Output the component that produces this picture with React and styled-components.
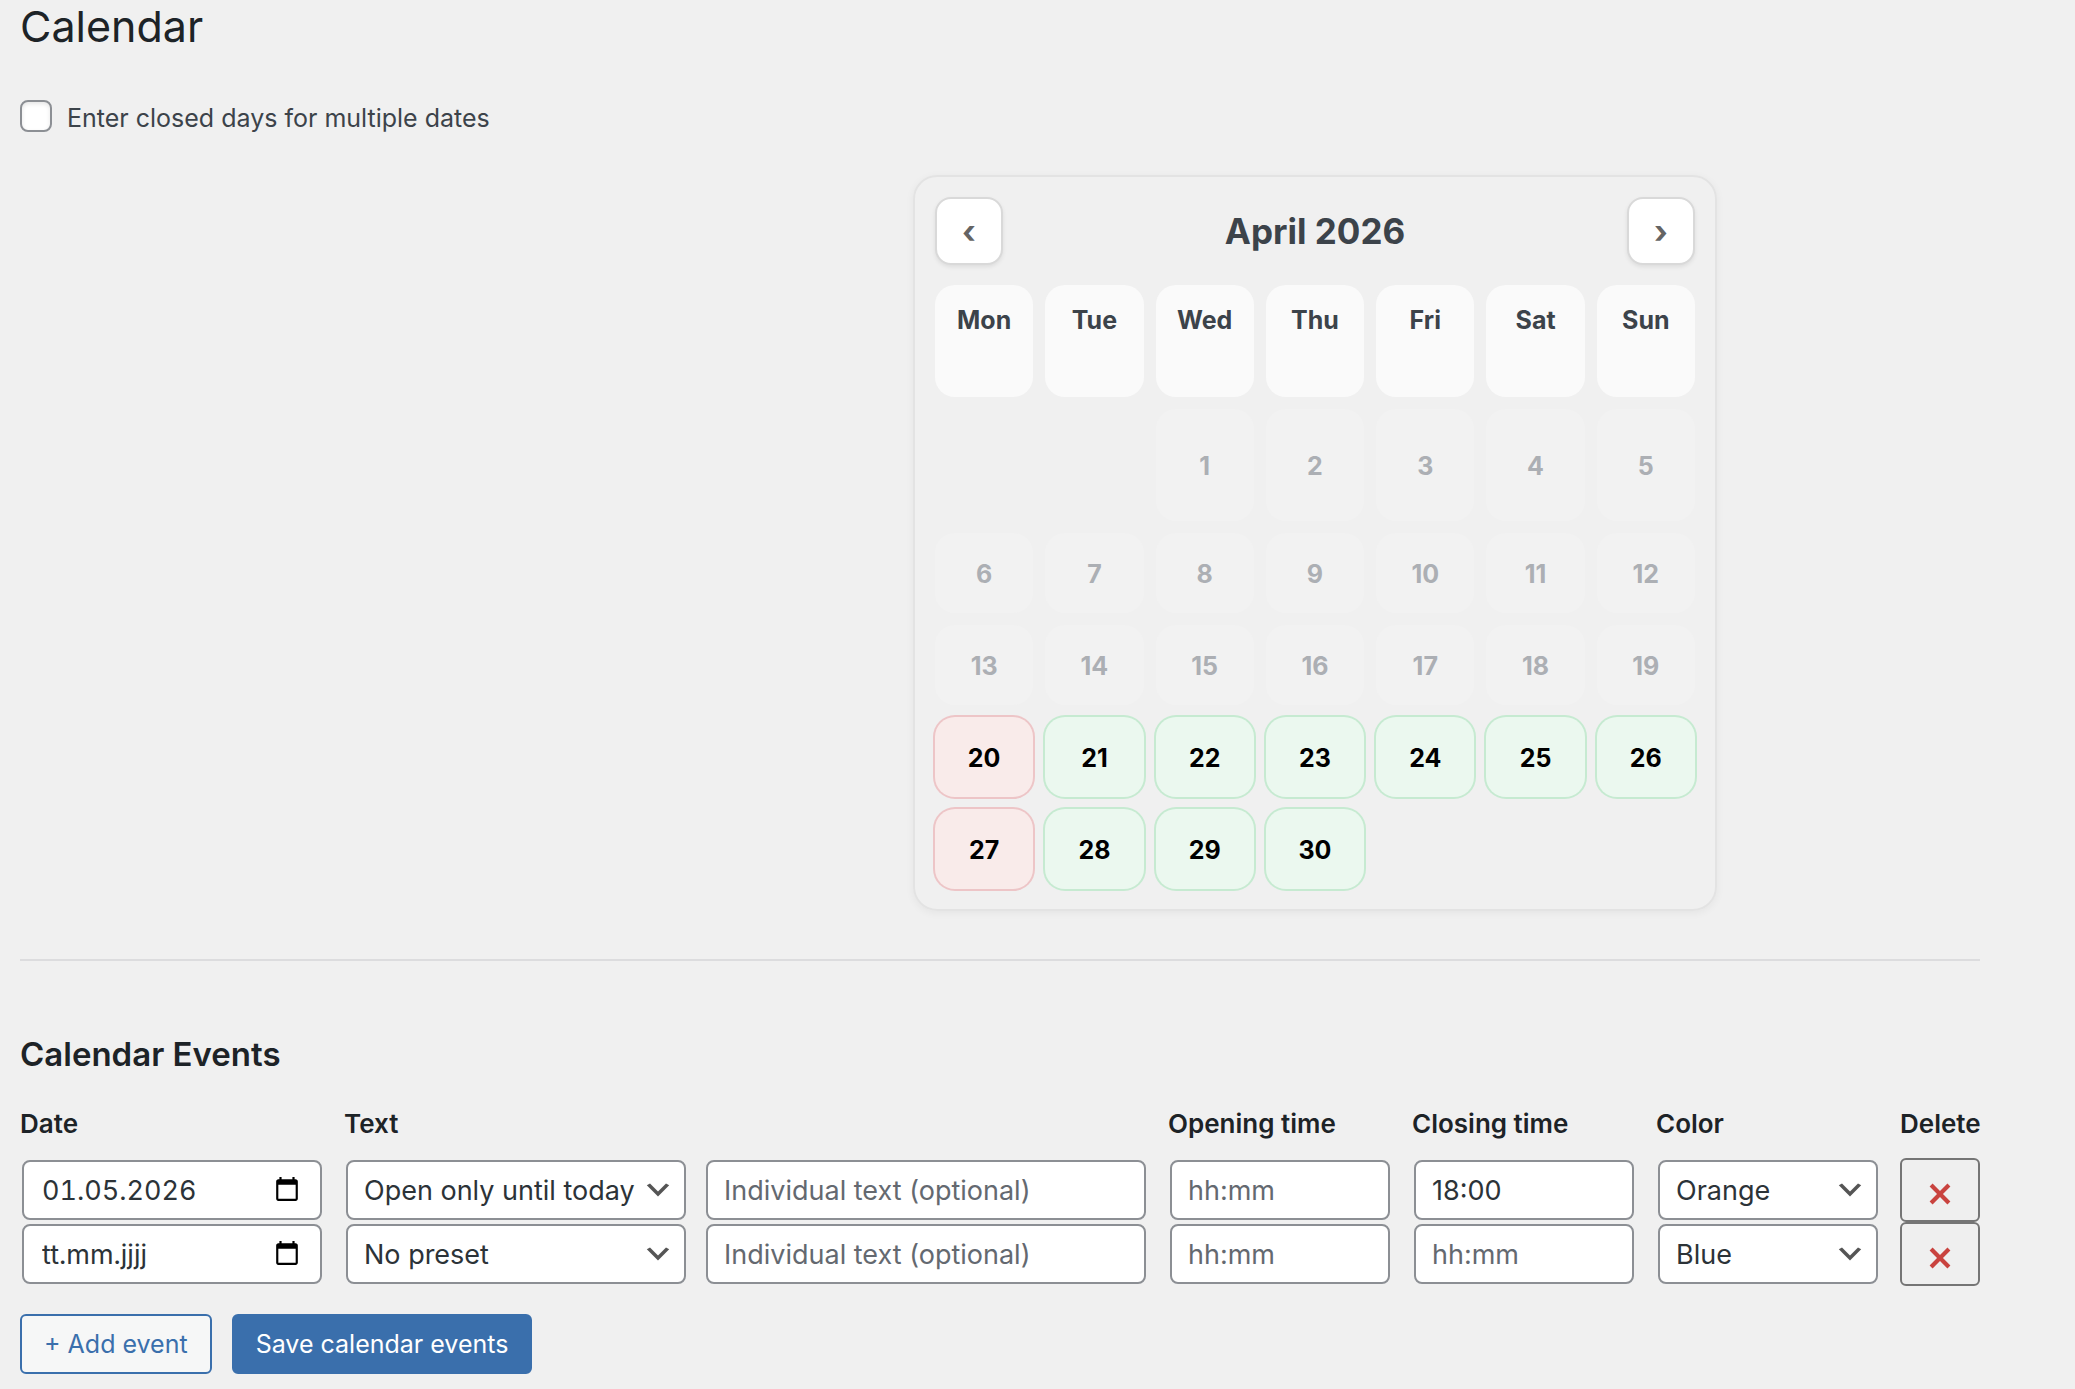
import React, { useState } from "react";
import styled, { createGlobalStyle, css } from "styled-components";

const WEEKDAYS = ["Mon", "Tue", "Wed", "Thu", "Fri", "Sat", "Sun"];
const MONTHS = [
  "January",
  "February",
  "March",
  "April",
  "May",
  "June",
  "July",
  "August",
  "September",
  "October",
  "November",
  "December"
];
const PRESETS = ["No preset", "Open only until today"];
const COLORS = ["Orange", "Blue"];

const TODAY = new Date(2026, 3, 20);

const initialEvents = [
  {
    id: 1,
    date: "01.05.2026",
    preset: "Open only until today",
    text: "",
    opening: "",
    closing: "18:00",
    color: "Orange"
  },
  {
    id: 2,
    date: "",
    preset: "No preset",
    text: "",
    opening: "",
    closing: "",
    color: "Blue"
  }
];

const getDays = (year, month) => {
  const offset = (new Date(year, month, 1).getDay() + 6) % 7;
  const count = new Date(year, month + 1, 0).getDate();
  const cells = Array.from({ length: offset }, () => null);
  for (let day = 1; day <= count; day++) {
    const date = new Date(year, month, day);
    let status = "open";
    if (date < TODAY) status = "past";
    else if (date.getDay() === 1) status = "closed";
    cells.push({ day, status });
  }
  return cells;
};

const CalendarIcon = () => (
  <svg width="26" height="26" viewBox="0 0 24 24" aria-hidden="true">
    <path d="M20 3h-1V1h-2v2H7V1H5v2H4c-1.1 0-2 .9-2 2v16c0 1.1.9 2 2 2h16c1.1 0 2-.9 2-2V5c0-1.1-.9-2-2-2zm0 18H4V8h16v13z" />
  </svg>
);

const CloseIcon = () => (
  <svg width="42" height="42" viewBox="0 0 20 20" aria-hidden="true">
    <path
      fill="currentColor"
      d="M14.95 6.46L11.41 10l3.54 3.54-1.41 1.41L10 11.42l-3.53 3.53-1.42-1.42L8.58 10 5.05 6.47l1.42-1.42L10 8.58l3.54-3.53z"
    />
  </svg>
);

const Select = ({ options, ...rest }) => (
  <SelectWrap>
    <SelectField {...rest}>
      {options.map(option => (
        <option key={option}>{option}</option>
      ))}
    </SelectField>
    <SelectArrow viewBox="0 0 20 20" aria-hidden="true">
      <path fill="#555" d="M5 6l5 5 5-5 2 1-7 7-7-7 2-1z" />
    </SelectArrow>
  </SelectWrap>
);

const MonthCalendar = () => {
  const [month, setMonth] = useState({ year: 2026, index: 3 });

  const move = step => {
    const next = new Date(month.year, month.index + step, 1);
    setMonth({ year: next.getFullYear(), index: next.getMonth() });
  };

  return (
    <Card>
      <CardHeader>
        <NavButton
          type="button"
          aria-label="Previous month"
          onClick={() => move(-1)}
        >
          ‹
        </NavButton>
        <MonthTitle>
          {MONTHS[month.index]} {month.year}
        </MonthTitle>
        <NavButton
          type="button"
          aria-label="Next month"
          onClick={() => move(1)}
        >
          ›
        </NavButton>
      </CardHeader>
      <DayGrid>
        {WEEKDAYS.map(name => (
          <Weekday key={name}>{name}</Weekday>
        ))}
        {getDays(month.year, month.index).map((cell, i) =>
          cell ? (
            <Day
              key={i}
              type="button"
              $status={cell.status}
              disabled={cell.status === "past"}
            >
              {cell.day}
            </Day>
          ) : (
            <span key={i} />
          )
        )}
      </DayGrid>
    </Card>
  );
};

const EventRow = ({ event, onChange, onDelete }) => {
  const field = name => ({
    id: `${name}-${event.id}`,
    value: event[name],
    onChange: e => onChange(event.id, name, e.target.value)
  });

  return (
    <Row>
      <DateBox>
        <DateInput
          type="text"
          aria-label="Date"
          placeholder="tt.mm.jjjj"
          {...field("date")}
        />
        <PickerButton type="button" aria-label="Open date picker">
          <CalendarIcon />
        </PickerButton>
      </DateBox>
      <TextCell>
        <Select aria-label="Preset text" options={PRESETS} {...field("preset")} />
        <Input
          type="text"
          aria-label="Individual text"
          placeholder="Individual text (optional)"
          {...field("text")}
        />
      </TextCell>
      <Input
        type="text"
        aria-label="Opening time"
        placeholder="hh:mm"
        {...field("opening")}
      />
      <Input
        type="text"
        aria-label="Closing time"
        placeholder="hh:mm"
        {...field("closing")}
      />
      <Select aria-label="Color" options={COLORS} {...field("color")} />
      <DeleteButton
        type="button"
        aria-label="Delete event"
        onClick={() => onDelete(event.id)}
      >
        <CloseIcon />
      </DeleteButton>
    </Row>
  );
};

const App = () => {
  const [events, setEvents] = useState(initialEvents);
  const [multiple, setMultiple] = useState(false);

  const changeEvent = (id, name, value) =>
    setEvents(events.map(e => (e.id === id ? { ...e, [name]: value } : e)));

  const deleteEvent = id => setEvents(events.filter(e => e.id !== id));

  const addEvent = () =>
    setEvents([...events, { ...initialEvents[1], id: Date.now() }]);

  return (
    <>
      <GlobalStyle />
      <Page>
        <Title>Calendar</Title>
        <CheckRow>
          <Checkbox
            id="multiple-dates"
            type="checkbox"
            checked={multiple}
            onChange={e => setMultiple(e.target.checked)}
          />
          <label htmlFor="multiple-dates">
            Enter closed days for multiple dates
          </label>
        </CheckRow>
        <CalendarArea>
          <MonthCalendar />
        </CalendarArea>
        <Divider />
        <SubTitle>Calendar Events</SubTitle>
        <form onSubmit={e => e.preventDefault()}>
          <HeaderRow>
            <label htmlFor="date-1">Date</label>
            <label htmlFor="preset-1">Text</label>
            <label htmlFor="opening-1">Opening time</label>
            <label htmlFor="closing-1">Closing time</label>
            <label htmlFor="color-1">Color</label>
            <span>Delete</span>
          </HeaderRow>
          {events.map(event => (
            <EventRow
              key={event.id}
              event={event}
              onChange={changeEvent}
              onDelete={deleteEvent}
            />
          ))}
          <Actions>
            <Button type="button" onClick={addEvent}>
              + Add event
            </Button>
            <Button type="submit" $primary>
              Save calendar events
            </Button>
          </Actions>
        </form>
      </Page>
    </>
  );
};

export default App;

const GlobalStyle = createGlobalStyle`
  * {
    box-sizing: border-box;
  }
  body {
    margin: 0;
    background: #f0f0f0;
    color: #3c434a;
    font-family: Inter, "Liberation Sans", sans-serif;
    font-size: 25px;
    line-height: 36px;
  }
  button,
  input,
  select {
    font-family: inherit;
  }
`;

const Page = styled.main`
  padding: 0 95px 16px 20px;
`;

const Title = styled.h1`
  margin: 0;
  color: #1d2327;
  font-size: 43px;
  font-weight: 400;
  line-height: 52px;
`;

const CheckRow = styled.div`
  display: flex;
  align-items: flex-start;
  gap: 15px;
  margin-top: 48px;
`;

const Checkbox = styled.input`
  appearance: none;
  width: 32px;
  height: 32px;
  margin: 0;
  border: 2px solid #8c8f94;
  border-radius: 8px;
  background: #fff;
  box-shadow: inset 0 2px 4px rgba(0, 0, 0, 0.1);

  &:checked {
    background: #3a6fac;
  }
`;

const CalendarArea = styled.section`
  display: grid;
  grid-template-columns: 804px;
  justify-content: center;
  margin-top: 39px;
  padding-left: 630px;
`;

const Card = styled.div`
  padding: 20px;
  border: 2px solid #e3e3e3;
  border-radius: 24px;
  box-shadow: 0 2px 8px rgba(0, 0, 0, 0.05);
`;

const CardHeader = styled.div`
  display: flex;
  align-items: center;
  justify-content: space-between;
  margin-bottom: 20px;
`;

const NavButton = styled.button`
  width: 68px;
  height: 68px;
  padding: 0;
  border: 2px solid #d9d9d9;
  border-radius: 16px;
  background: #fff;
  box-shadow: 0 2px 4px rgba(0, 0, 0, 0.08);
  color: #646464;
  font-size: 32px;
  font-weight: 700;
`;

const MonthTitle = styled.h2`
  margin: 0;
  font-size: 35px;
  font-weight: 700;
`;

const DayGrid = styled.div`
  display: grid;
  grid-template-columns: repeat(7, 1fr);
  grid-template-rows: 112px 112px;
  grid-auto-rows: 80px;
  gap: 12px;
  font-weight: 700;
`;

const Weekday = styled.div`
  padding-top: 17px;
  border-radius: 20px;
  background: #fafafa;
  text-align: center;
`;

const dayStatus = {
  past: css`
    background: #f2f2f2;
    color: #acafb4;
  `,
  open: css`
    background: #ebf8ef;
    box-shadow: 0 0 0 2px #c6ead1;
    color: #000;
  `,
  closed: css`
    background: #f9ebea;
    box-shadow: 0 0 0 2px #edc5c7;
    color: #000;
  `
};

const Day = styled.button`
  padding: 2px 0 0;
  border: 0;
  border-radius: 20px;
  font-size: inherit;
  font-weight: inherit;
  ${({ $status }) => dayStatus[$status]}
`;

const Divider = styled.hr`
  margin: 48px 0 0;
  border: 0;
  border-top: 2px solid #dcdcde;
`;

const SubTitle = styled.h2`
  margin: 75px 0 0;
  color: #1d2327;
  font-size: 33px;
  font-weight: 600;
`;

const gridColumns = css`
  display: grid;
  grid-template-columns: 304px 1fr 224px 224px 224px 80px;
  column-gap: 20px;
`;

const HeaderRow = styled.div`
  ${gridColumns}
  margin: 34px 0 16px;
  color: #1d2327;
  font-size: 26px;
  font-weight: 600;
`;

const Row = styled.div`
  ${gridColumns}
  align-items: center;
  height: 64px;
`;

const fieldBox = css`
  height: 60px;
  margin: 0 2px;
  border: 2px solid #8c8f94;
  border-radius: 8px;
  background: #fff;
  color: #2c3338;
  font-size: 27px;
`;

const Input = styled.input`
  ${fieldBox}
  min-width: 0;
  padding: 0 16px;

  &::placeholder {
    color: #646970;
    opacity: 1;
  }
`;

const DateBox = styled.div`
  ${fieldBox}
  display: flex;
  align-items: center;
  padding: 0 20px 0 18px;
`;

const DateInput = styled.input`
  flex: 1;
  min-width: 0;
  padding: 0;
  border: 0;
  background: none;
  color: inherit;
  font-size: inherit;
  font-variant-numeric: tabular-nums;

  &::placeholder {
    color: inherit;
    opacity: 1;
  }
`;

const PickerButton = styled.button`
  display: flex;
  padding: 0 0 2px;
  border: 0;
  background: none;
`;

const TextCell = styled.div`
  display: grid;
  grid-template-columns: 344px 1fr;
  column-gap: 16px;
`;

const SelectWrap = styled.div`
  display: grid;
  align-items: center;
`;

const SelectField = styled.select`
  ${fieldBox}
  grid-area: 1 / 1;
  min-width: 0;
  padding: 0 48px 0 16px;
  appearance: none;
`;

const SelectArrow = styled.svg`
  grid-area: 1 / 1;
  justify-self: end;
  width: 32px;
  height: 32px;
  margin-right: 14px;
  pointer-events: none;
`;

const DeleteButton = styled.button`
  display: flex;
  align-items: center;
  justify-content: center;
  height: 64px;
  padding: 8px 0 0;
  border: 2px solid #757575;
  border-radius: 6px;
  background: #efefef;
  color: #c9433f;
`;

const Actions = styled.div`
  display: flex;
  gap: 20px;
  margin-top: 28px;
`;

const Button = styled.button`
  height: 60px;
  padding: 0 22px;
  border: 2px solid #3a6fac;
  border-radius: 6px;
  background: ${({ $primary }) => ($primary ? "#3a6fac" : "#f6f7f7")};
  color: ${({ $primary }) => ($primary ? "#fff" : "#3a6fac")};
  font-size: 25px;
`;
